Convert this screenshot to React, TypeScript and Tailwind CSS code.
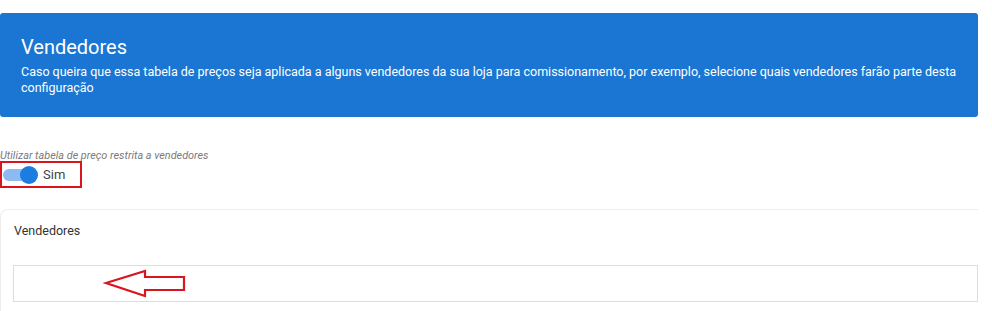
import React from "react";

export default function App() {
  return (
    <div
      className="relative w-[992px] h-[311px] overflow-hidden bg-white"
      style={{ fontFamily: "Roboto, 'Liberation Sans', sans-serif" }}
    >
      <div className="w-[978px] pt-[13px]">
        <div className="bg-[#1a76d2] rounded-[3px] h-[104px] px-[21px] pt-[22px]">
          <div className="text-[20px] leading-[24px] text-white">Vendedores</div>
          <div className="mt-[5px] text-[12.5px] leading-[16px] text-white">
            Caso queira que essa tabela de preços seja aplicada a alguns vendedores da sua loja para comissionamento, por exemplo, selecione quais vendedores farão parte desta configuração
          </div>
        </div>

        <div className="mt-[32px] text-[10.85px] leading-[13px] italic text-[#7a7a7a]">
          Utilizar tabela de preço restrita a vendedores
        </div>

        <div className="mt-[-1px] w-[82px] h-[27px] border-[2.5px] border-[#d9151f] flex items-center">
          <div className="relative ml-[1px] w-[33px] h-[12px] rounded-full bg-[#8dbaf0]">
            <div className="absolute right-[-2px] top-[-3px] w-[18px] h-[18px] rounded-full bg-[#1c7ce0]" />
          </div>
          <span className="ml-[7px] text-[13px] leading-[16px] text-[#444444]">Sim</span>
        </div>

        <div className="mt-[21px] border border-r-0 border-[#eeeeee] rounded-tl-[8px] pt-[13px] pb-[20px]">
          <div className="pl-[13px] text-[12.5px] leading-[16px] text-[#333333]">Vendedores</div>
          <div className="mt-[26px] ml-[12px] h-[37px] border border-[#dddddd]" />
        </div>
      </div>

      <svg
        className="absolute left-0 top-0 pointer-events-none"
        width="992"
        height="311"
        viewBox="0 0 992 311"
      >
        <polygon
          points="106,283 145,271 145,277 184,277 184,290 145,290 145,296"
          fill="none"
          stroke="#d9151f"
          strokeWidth="2.2"
          strokeLinejoin="miter"
        />
      </svg>
    </div>
  );
}
